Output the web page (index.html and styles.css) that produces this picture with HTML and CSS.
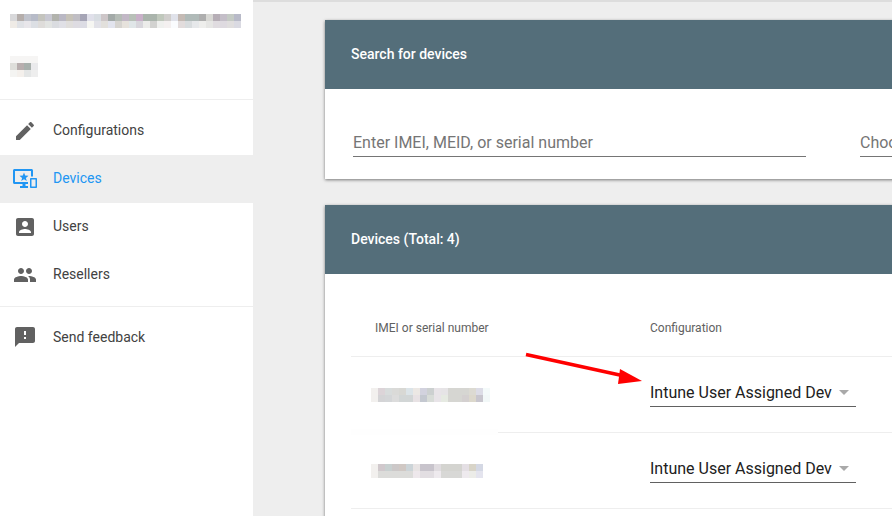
FILE: index.html
```html
<!DOCTYPE html>
<html lang="en">
<head>
    <meta charset="UTF-8">
    <meta name="viewport" content="width=device-width, initial-scale=1.0">
    <title>Devices</title>
    <link rel="stylesheet" href="styles.css">
</head>
<body>
    <div class="app">

        <!-- Sidebar -->
        <aside class="sidebar">
            <div class="account">
                <svg class="blur-name" width="231" height="14" viewBox="0 0 33 2" shape-rendering="crispEdges">
                    <g id="name-top">
                        <rect x="0" width="1" height="1" fill="#d8d8da"/><rect x="1" width="1" height="1" fill="#b5aeab"/><rect x="2" width="1" height="1" fill="#c0c3cc"/><rect x="3" width="1" height="1" fill="#b7bbc8"/><rect x="4" width="1" height="1" fill="#c4c4be"/><rect x="5" width="1" height="1" fill="#c8c8d2"/><rect x="6" width="1" height="1" fill="#b2b3ad"/><rect x="7" width="1" height="1" fill="#bab8c4"/><rect x="8" width="1" height="1" fill="#c6c2b8"/><rect x="9" width="1" height="1" fill="#c0bec4"/><rect x="10" width="1" height="1" fill="#a6a5b6"/><rect x="11" width="1" height="1" fill="#e0e0ea"/><rect x="12" width="1" height="1" fill="#d8dde2"/><rect x="13" width="1" height="1" fill="#cdc6c8"/><rect x="14" width="1" height="1" fill="#a3aaa8"/><rect x="15" width="1" height="1" fill="#b5bcb6"/><rect x="16" width="1" height="1" fill="#c2b8c6"/><rect x="17" width="1" height="1" fill="#b8c0b8"/><rect x="18" width="1" height="1" fill="#c8b0c8"/><rect x="19" width="2" height="1" fill="#aab4ac"/><rect x="21" width="1" height="1" fill="#c0c8bc"/><rect x="22" width="1" height="1" fill="#d0cecc"/><rect x="23" width="1" height="1" fill="#e0e2ea"/><rect x="24" width="1" height="1" fill="#c4bab4"/><rect x="25" width="2" height="1" fill="#b0bab8"/><rect x="27" width="1" height="1" fill="#aeaeae"/><rect x="28" width="1" height="1" fill="#d8d8d4"/><rect x="29" width="1" height="1" fill="#b6aeb6"/><rect x="30" width="1" height="1" fill="#c4bec8"/><rect x="31" width="1" height="1" fill="#c4cac4"/><rect x="32" width="1" height="1" fill="#b8bac8"/>
                    </g>
                    <g id="name-bottom">
                        <rect x="0" y="1" width="1" height="1" fill="#efebe6"/><rect x="1" y="1" width="1" height="1" fill="#e0e2e6"/><rect x="2" y="1" width="1" height="1" fill="#e8e6ea"/><rect x="3" y="1" width="1" height="1" fill="#dcdfe4"/><rect x="4" y="1" width="1" height="1" fill="#dedcda"/><rect x="5" y="1" width="1" height="1" fill="#e2e4e2"/><rect x="6" y="1" width="1" height="1" fill="#dadce0"/><rect x="7" y="1" width="1" height="1" fill="#e0e0e6"/><rect x="8" y="1" width="1" height="1" fill="#e0dedc"/><rect x="9" y="1" width="1" height="1" fill="#dedce2"/><rect x="10" y="1" width="1" height="1" fill="#dcdce4"/><rect x="11" y="1" width="1" height="1" fill="#f6f6f2"/><rect x="12" y="1" width="1" height="1" fill="#e2e2e8"/><rect x="13" y="1" width="1" height="1" fill="#e2e0dc"/><rect x="14" y="1" width="1" height="1" fill="#e2e4ee"/><rect x="15" y="1" width="1" height="1" fill="#d6d4d0"/><rect x="16" y="1" width="1" height="1" fill="#e6e2dc"/><rect x="17" y="1" width="1" height="1" fill="#e0e6e8"/><rect x="18" y="1" width="1" height="1" fill="#d8d6dc"/><rect x="19" y="1" width="1" height="1" fill="#ececea"/><rect x="20" y="1" width="1" height="1" fill="#d2d2d0"/><rect x="21" y="1" width="1" height="1" fill="#eff0ee"/><rect x="22" y="1" width="1" height="1" fill="#f4f0f0"/><rect x="23" y="1" width="1" height="1" fill="#fafcfe"/><rect x="24" y="1" width="1" height="1" fill="#e2dcdc"/><rect x="25" y="1" width="1" height="1" fill="#d8dcde"/><rect x="26" y="1" width="1" height="1" fill="#e6e8ea"/><rect x="27" y="1" width="1" height="1" fill="#eeeeec"/><rect x="28" y="1" width="1" height="1" fill="#e6e6e4"/><rect x="29" y="1" width="1" height="1" fill="#e0dce0"/><rect x="30" y="1" width="1" height="1" fill="#dedae0"/><rect x="31" y="1" width="1" height="1" fill="#e0dede"/><rect x="32" y="1" width="1" height="1" fill="#dadae2"/>
                    </g>
                </svg>
                <svg class="blur-role" width="28" height="21" viewBox="0 0 4 3" shape-rendering="crispEdges">
                    <rect width="4" height="1" fill="#f6f5f4"/>
                    <rect y="1" width="1" height="1" fill="#dededa"/><rect x="1" y="1" width="1" height="1" fill="#b8aeae"/><rect x="2" y="1" width="1" height="1" fill="#a8b0ac"/><rect x="3" y="1" width="1" height="1" fill="#eaeaec"/>
                    <rect y="2" width="1" height="1" fill="#f4f4f2"/><rect x="1" y="2" width="1" height="1" fill="#f4f0ec"/><rect x="2" y="2" width="1" height="1" fill="#e4e6e6"/><rect x="3" y="2" width="1" height="1" fill="#eeeeee"/>
                </svg>
            </div>

            <nav class="nav">
                <a class="nav-item" href="#">
                    <svg class="nav-icon" viewBox="0 0 24 24"><path d="M3 17.25V21h3.75L17.81 9.94l-3.75-3.75L3 17.25zM20.71 7.04c.39-.39.39-1.02 0-1.41l-2.34-2.34c-.39-.39-1.02-.39-1.41 0l-1.83 1.83 3.75 3.75 1.83-1.83z"/></svg>
                    <span class="nav-label">Configurations</span>
                </a>
                <a class="nav-item active" href="#">
                    <svg class="nav-icon" viewBox="0 0 24 24">
                        <path d="M1.5 2H18.5C19.3 2 20 2.7 20 3.5V9.5H18V4H2V15H15V17H12.5V19H15V21H7V19H9.5V17H1.5C.7 17 0 16.3 0 15.5V3.5C0 2.7.7 2 1.5 2z"/>
                        <path d="M11 5.5l1.2 3.1 3.3.2-2.6 2.1.9 3.2-2.8-1.8-2.8 1.8.9-3.2-2.6-2.1 3.3-.2z"/>
                        <path fill-rule="evenodd" d="M18 11h5c.6 0 1 .4 1 1v8c0 .6-.4 1-1 1h-5c-.6 0-1-.4-1-1v-8c0-.6.4-1 1-1zm.5 1.5v7h4v-7z"/>
                    </svg>
                    <span class="nav-label">Devices</span>
                </a>
                <a class="nav-item" href="#">
                    <svg class="nav-icon" viewBox="0 0 24 24"><path d="M3 5v14c0 1.1.89 2 2 2h14c1.1 0 2-.9 2-2V5c0-1.1-.9-2-2-2H5c-1.11 0-2 .9-2 2zm12 4c0 1.66-1.34 3-3 3s-3-1.34-3-3 1.34-3 3-3 3 1.34 3 3zm-9 8c0-2 4-3.1 6-3.1s6 1.1 6 3.1v1H6v-1z"/></svg>
                    <span class="nav-label">Users</span>
                </a>
                <a class="nav-item" href="#">
                    <svg class="nav-icon" viewBox="0 0 24 24"><path d="M16 11c1.66 0 2.99-1.34 2.99-3S17.66 5 16 5c-1.66 0-3 1.34-3 3s1.34 3 3 3zm-8 0c1.66 0 2.99-1.34 2.99-3S9.66 5 8 5C6.34 5 5 6.34 5 8s1.34 3 3 3zm0 2c-2.33 0-7 1.17-7 3.5V19h14v-2.5c0-2.33-4.67-3.5-7-3.5zm8 0c-.29 0-.62.02-.97.05 1.16.84 1.97 1.97 1.97 3.45V19h6v-2.5c0-2.33-4.67-3.5-7-3.5z"/></svg>
                    <span class="nav-label">Resellers</span>
                </a>
            </nav>
            <nav class="nav nav-bottom">
                <a class="nav-item" href="#">
                    <svg class="nav-icon" viewBox="0 0 24 24"><path d="M20 2H4c-1.1 0-1.99.9-1.99 2L2 22l4-4h14c1.1 0 2-.9 2-2V4c0-1.1-.9-2-2-2zm-7 12h-2v-2h2v2zm0-4h-2V6h2v4z"/></svg>
                    <span>Send feedback</span>
                </a>
            </nav>
        </aside>

        <!-- Main content -->
        <main class="main">
            <section class="card">
                <h2 class="card-title">Search for devices</h2>
                <div class="search-body">
                    <div class="field field-search">Enter IMEI, MEID, or serial number</div>
                    <div class="field field-choose">Choose</div>
                </div>
            </section>

            <section class="card">
                <h2 class="card-title">Devices (Total: 4)</h2>
                <div class="table">
                    <div class="table-row table-head">
                        <div class="col-id">IMEI or serial number</div>
                        <div>Configuration</div>
                    </div>
                    <div class="table-row">
                        <div class="col-id">
                            <svg width="119" height="14" viewBox="0 0 17 2" shape-rendering="crispEdges">
                                <rect width="1" height="2" fill="#f2f0ee"/>
                                <rect x="1" width="1" height="1" fill="#dcd4d8"/><rect x="2" width="1" height="1" fill="#d8dcdc"/><rect x="3" width="1" height="1" fill="#dadad8"/><rect x="4" width="1" height="1" fill="#d8d8d4"/><rect x="5" width="1" height="1" fill="#dce4e8"/><rect x="6" width="1" height="1" fill="#ece8e4"/><rect x="7" width="1" height="1" fill="#d2d2de"/><rect x="8" width="1" height="1" fill="#ccd0d0"/><rect x="9" width="1" height="1" fill="#e8e4e8"/><rect x="10" width="1" height="1" fill="#e6e4e6"/><rect x="11" width="3" height="1" fill="#d6d6d2"/><rect x="14" width="1" height="1" fill="#dcdad2"/><rect x="15" width="1" height="1" fill="#dcdce6"/><rect x="16" width="1" height="1" fill="#f4fafa"/>
                                <rect x="1" y="1" width="1" height="1" fill="#d4d4d6"/><rect x="2" y="1" width="1" height="1" fill="#d4d6d8"/><rect x="3" y="1" width="1" height="1" fill="#dcdcdc"/><rect x="4" y="1" width="2" height="1" fill="#d2d6d6"/><rect x="6" y="1" width="1" height="1" fill="#e8e2e4"/><rect x="7" y="1" width="1" height="1" fill="#c4c8d0"/><rect x="8" y="1" width="1" height="1" fill="#d8dcd8"/><rect x="9" y="1" width="1" height="1" fill="#e8e4e8"/><rect x="10" y="1" width="1" height="1" fill="#e6eae2"/><rect x="11" y="1" width="2" height="1" fill="#d6d6d2"/><rect x="13" y="1" width="1" height="1" fill="#d4d0d0"/><rect x="14" y="1" width="1" height="1" fill="#dcd8cc"/><rect x="15" y="1" width="1" height="1" fill="#c8c6ce"/><rect x="16" y="1" width="1" height="1" fill="#f2f8f8"/>
                            </svg>
                        </div>
                        <div class="select"><span class="select-value">Intune User Assigned Dev</span><span class="select-arrow"></span></div>
                    </div>
                    <div class="table-row">
                        <div class="patch"></div>
                        <div class="col-id">
                            <svg width="112" height="14" viewBox="0 0 16 2" shape-rendering="crispEdges">
                                <rect width="1" height="2" fill="#f2f0ee"/>
                                <rect x="1" width="1" height="1" fill="#d0c8cc"/><rect x="2" width="1" height="1" fill="#c8d0d0"/><rect x="3" width="1" height="1" fill="#ccc8c8"/><rect x="4" width="1" height="1" fill="#d0c8c4"/><rect x="5" width="1" height="1" fill="#ccd4d8"/><rect x="6" width="1" height="1" fill="#e8e4e4"/><rect x="7" width="2" height="1" fill="#c8c4cc"/><rect x="9" width="1" height="1" fill="#e0dce0"/><rect x="10" width="3" height="1" fill="#d4d4d0"/><rect x="13" width="1" height="1" fill="#e4dfe4"/><rect x="14" width="1" height="1" fill="#d8d4c8"/><rect x="15" width="1" height="1" fill="#d4d8e4"/>
                                <rect x="1" y="1" width="5" height="1" fill="#dcdcda"/><rect x="6" y="1" width="1" height="1" fill="#eee8ec"/><rect x="7" y="1" width="2" height="1" fill="#e2dee2"/><rect x="9" y="1" width="1" height="1" fill="#eeeaee"/><rect x="10" y="1" width="3" height="1" fill="#d8d8d6"/><rect x="13" y="1" width="1" height="1" fill="#eeeaee"/><rect x="14" y="1" width="1" height="1" fill="#ecece8"/><rect x="15" y="1" width="1" height="1" fill="#e4e4ee"/>
                            </svg>
                        </div>
                        <div class="select"><span class="select-value">Intune User Assigned Dev</span><span class="select-arrow"></span></div>
                    </div>
                    <div class="table-row"></div>
                </div>
            </section>
        </main>
    </div>

    <!-- Red annotation arrow drawn over the screenshot -->
    <svg class="annotation" width="892" height="516" viewBox="0 0 892 516">
        <path d="M526 354.5 L622 375.5" stroke="#ff0000" stroke-width="3.6" fill="none"/>
        <path d="M620 369 L642 381 L618 384 z" fill="#ff0000"/>
    </svg>
</body>
</html>
```

FILE: styles.css
```css
body {
    font-family: Roboto, Arial, sans-serif;
    margin: 0;
    height: 516px;
    overflow: hidden;
    background-color: #eeeeee;
    color: #212121;
}
.app {
    display: flex;
    height: 516px;
    overflow: hidden;
}

/* sidebar */
.sidebar {
    flex: 0 0 253px;
    background: white;
}
.account {
    height: 85px;
    padding: 14px 0 0 10px;
    border-bottom: 1px solid #eeeeee;
}
.blur-name {
    display: block;
    margin-bottom: 28px;
}
.blur-role {
    display: block;
}
.nav {
    padding: 7px 0 0;
}
.nav-bottom {
    margin-top: 7px;
    border-top: 1px solid #eeeeee;
    padding-top: 6px;
}
.nav-item {
    display: flex;
    align-items: center;
    gap: 16px;
    height: 48px;
    padding-left: 13px;
    font-size: 14px;
    color: #424242;
    text-decoration: none;
}
.nav-label {
    margin-bottom: 2px;
}
.nav-item.active {
    background-color: #eeeeee;
    color: #2196f3;
}
.nav-icon {
    width: 24px;
    height: 24px;
    flex: none;
    fill: #616161;
}
.active .nav-icon {
    fill: #2196f3;
}

/* main column */
.main {
    flex: none;
    width: 567px;
    padding: 20px 0 0 72px;
    box-shadow: inset 0 2px 0 #dddddd;
}
.card {
    width: 760px;
    margin-bottom: 26px;
    background: white;
    box-shadow: 0 1px 3px rgba(0, 0, 0, 0.5);
}
.card-title {
    margin: 0;
    height: 69px;
    line-height: 69px;
    padding-left: 26px;
    background-color: #546e7a;
    color: white;
    font-size: 14px;
    font-weight: 500;
}

/* search card */
.search-body {
    display: flex;
    height: 90px;
    padding-left: 28px;
    box-sizing: border-box;
}
.field {
    height: 27px;
    margin-top: 40px;
    line-height: 27px;
    border-bottom: 1px solid #757575;
    font-size: 16px;
    color: #757575;
}
.field-search {
    width: 453px;
    margin-right: 54px;
}
.field-choose {
    width: 200px;
}

/* devices table */
.table {
    margin-left: 26px;
}
.table-row {
    position: relative;
    display: flex;
    align-items: center;
    height: 75px;
    border-bottom: 1px solid #eeeeee;
}
.table-head {
    height: 83px;
    font-size: 12px;
    color: #616161;
    padding-top: 26px;
    box-sizing: border-box;
}
.col-id {
    flex: 0 0 299px;
    box-sizing: border-box;
    padding-left: 20px;
    line-height: 0;
}
.table-head .col-id {
    line-height: normal;
    padding-left: 24px;
}
.select {
    display: flex;
    align-items: center;
    width: 206px;
    height: 28px;
    margin-bottom: 4px;
    border-bottom: 1px solid #616161;
    font-size: 16px;
    color: #212121;
}
.select-value {
    width: 182px;
    white-space: nowrap;
}
.select-arrow {
    margin-left: 7px;
    border-top: 5px solid #a9a9a9;
    border-left: 5px solid transparent;
    border-right: 5px solid transparent;
}

/* white smear left over from the blur, hides part of the rule above row 2 */
.patch {
    position: absolute;
    left: 0;
    top: -4px;
    width: 147px;
    height: 6px;
    background-color: #fefefe;
}

.annotation {
    position: absolute;
    left: 0;
    top: 0;
    pointer-events: none;
}
```
